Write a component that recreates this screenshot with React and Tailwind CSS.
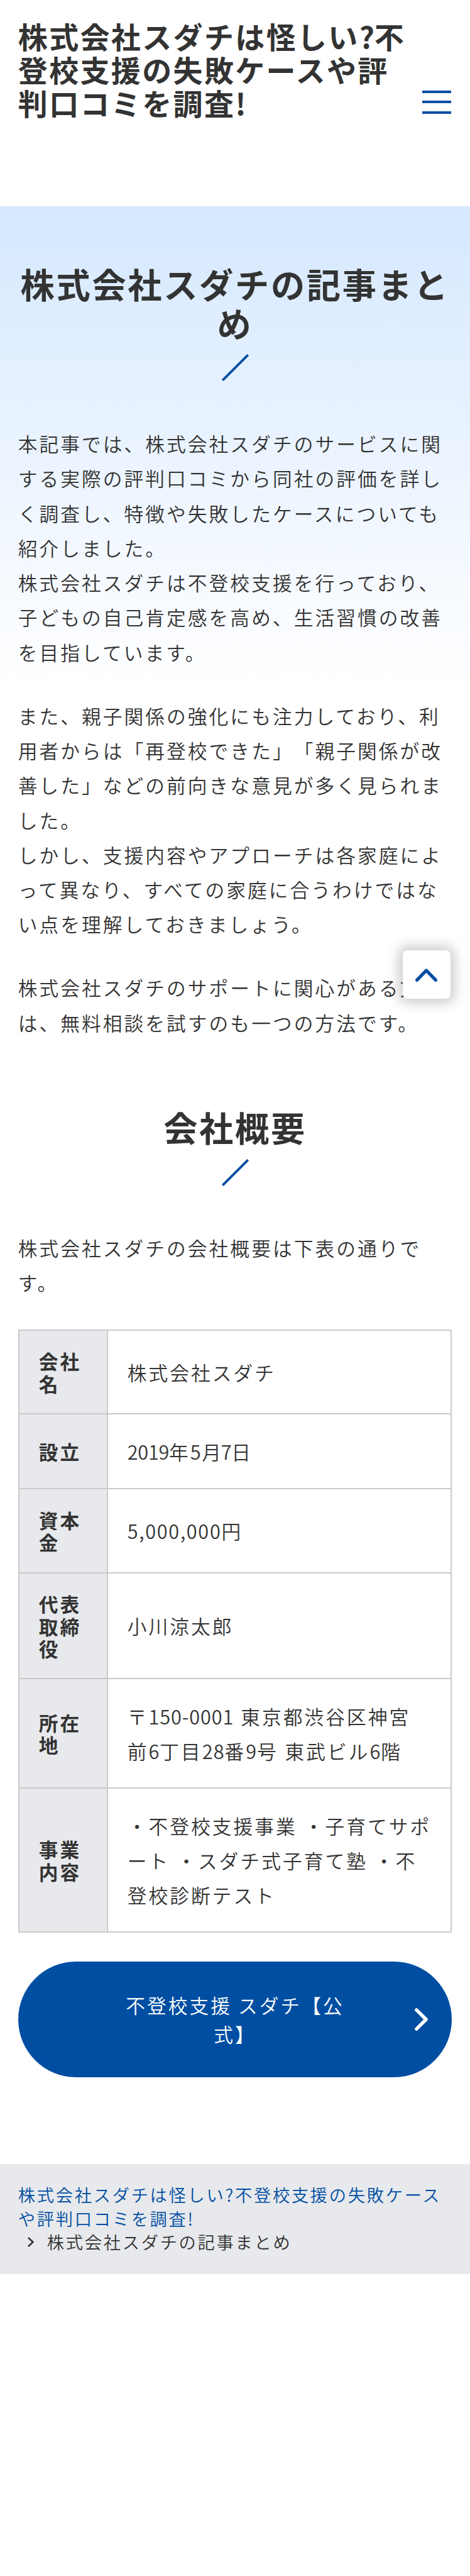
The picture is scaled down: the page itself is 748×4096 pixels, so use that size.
import React from "react";

const rows = [
  { h: "h-[133px]", head: ["会社", "名"], body: ["株式会社スダチ"] },
  {
    h: "h-[119px]",
    head: ["設立"],
    body: [
      <>
        <T>2019</T>年<N>5</N>
        <T>月7</T>日
      </>,
    ],
  },
  { h: "h-[134px]", head: ["資本", "金"], body: [<><N>5,000,000</N>円</>] },
  { h: "h-[168px]", head: ["代表", "取締", "役"], body: ["小川涼太郎"] },
  {
    h: "h-[174px]",
    head: ["所在", "地"],
    body: [
      <>〒<M>150-0001</M> 東京都渋谷区神宮</>,
      <>前<M>6</M>丁目<M>28</M>番<M>9</M>号 東武ビル<M>6</M>階</>,
    ],
  },
  {
    h: "h-[229px]",
    head: ["事業", "内容"],
    body: ["・不登校支援事業 ・子育てサポ", "ート ・スダチ式子育て塾 ・不", "登校診断テスト"],
  },
];

// Latin figures, set slightly tighter than the kana and kanji
function N({ children }) {
  return <span className="tracking-[0.055em]">{children}</span>;
}
function M({ children }) {
  return <span className="tracking-[0.03em]">{children}</span>;
}
function T({ children }) {
  return <span className="tracking-[-0.01em]">{children}</span>;
}

function Lines({ items }) {
  return items.map((t, i) => (
    <React.Fragment key={i}>
      {i > 0 && <br />}
      {t}
    </React.Fragment>
  ));
}

function Slash({ className }) {
  return (
    <svg className={"mx-auto block h-[43px] w-[43px] " + className} viewBox="0 0 43 43" fill="none">
      <path d="M1.3 41.7 41.7 1.3" stroke="#004ea2" strokeWidth="3.8" />
    </svg>
  );
}

function Para({ items, className }) {
  return (
    <p className={"text-[30.7px] leading-[55.24px] tracking-[0.1em] " + className}>
      <Lines items={items} />
    </p>
  );
}

export default function App() {
  return (
    <div className="relative h-[4096px] w-[748px] overflow-hidden bg-white font-['Noto_Sans_CJK_JP',sans-serif] font-[350] whitespace-nowrap text-[#333] [text-spacing-trim:space-all]">
      <header className="flex h-[328px] items-start justify-between pt-[30px] pr-[30.5px] pl-[28.8px]">
        <h1 className="text-[47px] leading-[53px] font-bold tracking-[0.05em]">
          株式会社スダチは怪しい<span className="tracking-[0em]">?</span>不<br />
          登校支援の失敗ケースや評
          <br />
          判口コミを調査!
        </h1>
        <button className="mt-[113.5px] flex w-[46px] flex-col gap-[12.5px]" aria-label="メニュー">
          <span className="h-[4px] w-full bg-[#004ea2]" />
          <span className="h-[4px] w-full bg-[#004ea2]" />
          <span className="h-[4px] w-full bg-[#004ea2]" />
        </button>
      </header>

      <main className="bg-[linear-gradient(180deg,#d5e8ff_0px,#ffffff_767px)] px-[28.8px] pt-[92.3px]">
        <h2 className="text-center text-[54.2px] leading-[62.1px] font-bold tracking-[0.05em]">
          株式会社スダチの記事まと
          <br />め
        </h2>
        <Slash className="mt-[19px]" />
        <Para
          className="mt-[70.7px]"
          items={[
            "本記事では、株式会社スダチのサービスに関",
            "する実際の評判口コミから同社の評価を詳し",
            "く調査し、特徴や失敗したケースについても",
            "紹介しました。",
            "株式会社スダチは不登校支援を行っており、",
            "子どもの自己肯定感を高め、生活習慣の改善",
            "を目指しています。",
          ]}
        />
        <Para
          className="mt-[46px]"
          items={[
            "また、親子関係の強化にも注力しており、利",
            "用者からは「再登校できた」「親子関係が改",
            "善した」などの前向きな意見が多く見られま",
            "した。",
            "しかし、支援内容やアプローチは各家庭によ",
            "って異なり、すべての家庭に合うわけではな",
            "い点を理解しておきましょう。",
          ]}
        />
        <Para
          className="mt-[46px]"
          items={["株式会社スダチのサポートに関心がある方", "は、無料相談を試すのも一つの方法です。"]}
        />

        <h2 className="mt-[108.5px] text-center text-[54.2px] leading-[62.1px] font-bold tracking-[0.05em]">会社概要</h2>
        <Slash className="mt-[19px]" />
        <Para className="mt-[70.2px]" items={["株式会社スダチの会社概要は下表の通りで", "す。"]} />

        <dl className="mt-[47.4px] border-2 border-b-0 border-[#c9cacb]">
          {rows.map((r, i) => (
            <div key={i} className={"flex border-b-2 border-[#c9cacb] " + r.h}>
              <dt className="flex w-[141px] shrink-0 items-center border-r-2 border-[#c9cacb] bg-[#e7e9ec] pt-[1px] pl-[31px] text-[30.7px] leading-[35.1px] font-bold tracking-[0.1em]">
                <span>
                  <Lines items={r.head} />
                </span>
              </dt>
              <dd className="flex items-center pt-[1px] pl-[31px] text-[30.7px] leading-[55.24px] tracking-[0.1em] [word-spacing:0.03em]">
                <span>
                  <Lines items={r.body} />
                </span>
              </dd>
            </div>
          ))}
        </dl>

        <a className="mt-[46.6px] flex h-[184px] items-center rounded-full bg-[#004ea2] pr-[38px] text-white">
          <span className="flex-1 pl-[59px] text-center text-[30.7px] leading-[46px] tracking-[0.1em]">
            不登校支援 スダチ【公
            <br />
            式】
          </span>
          <svg className="block h-[36px] w-[21px]" viewBox="0 0 21 36" fill="none">
            <path d="M2.9 2.9 18.1 18 2.9 33.1" stroke="#fff" strokeWidth="5.4" strokeLinecap="round" strokeLinejoin="round" />
          </svg>
        </a>
      </main>

      <nav className="mt-[138px] h-[174.5px] bg-[#e7e9ec] pt-[30px] pl-[28.8px] text-[27.25px] leading-[37.5px] tracking-[0.1em]">
        <a className="block text-[#004ea2]">
          株式会社スダチは怪しい?不登校支援の失敗ケース
          <br />
          や評判口コミを調査!
        </a>
        <div className="flex items-center pl-[15px]">
          <svg className="mr-[21px] block h-[16px] w-[10px]" viewBox="0 0 10 16" fill="none">
            <path d="M1 1 8.4 8 1 15" stroke="#333" strokeWidth="2.6" />
          </svg>
          <span>株式会社スダチの記事まとめ</span>
        </div>
      </nav>

      <a className="absolute top-[1511.4px] right-[30.7px] flex h-[76.7px] w-[76.7px] items-center justify-center rounded-[7.7px] bg-white shadow-[0_0_19px_7px_rgba(0,0,0,0.2)]">
        <svg className="mt-[1px] block h-[21px] w-[35px]" viewBox="0 0 35 21" fill="none">
          <path d="M2.6 18.4 17.5 3 32.4 18.4" stroke="#004ea2" strokeWidth="5.2" strokeLinecap="round" strokeLinejoin="round" />
        </svg>
      </a>
    </div>
  );
}
